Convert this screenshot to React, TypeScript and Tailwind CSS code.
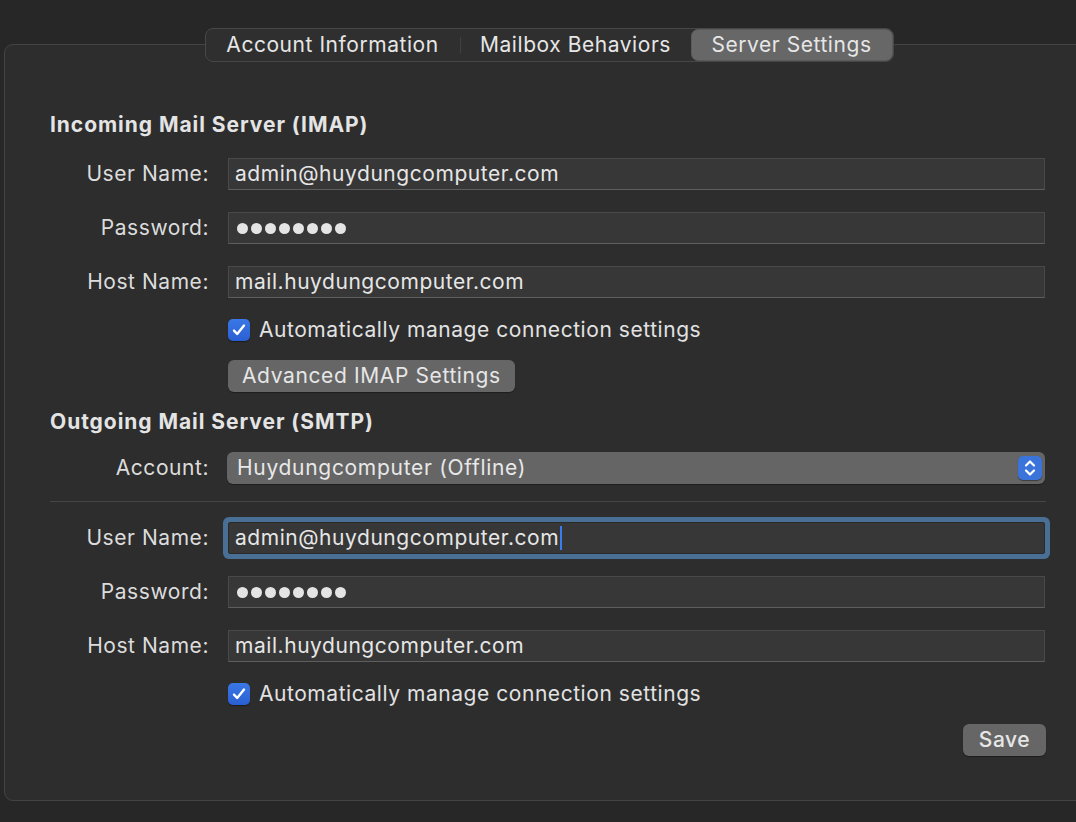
import React from 'react';

const font = { fontFamily: 'Inter, "Noto Sans", sans-serif' };

function Field({ label, value, focused }: { label: string; value?: string; focused?: boolean }) {
  return (
    <div className="flex items-center h-[32px]">
      <div className="w-[159px] text-right text-[21px] tracking-[0.55px] text-[#dcdcdc] shrink-0">{label}</div>
      <div
        className={
          focused
            ? 'ml-[19px] flex-1 h-[32px] flex items-center bg-[#373737] border border-[#2a2a2a] rounded-[2px] ring-[5px] ring-[#4a6f95] pl-[6px]'
            : 'ml-[19px] flex-1 h-[32px] flex items-center bg-[#373737] border border-[#494949] border-b-[#5e5e5e] pl-[6px]'
        }
      >
        {value ? (
          <span className="text-[21px] tracking-[0.55px] text-[#e6e6e6] flex items-center">
            {value}
            {focused && <span className="inline-block w-[2px] h-[24px] bg-[#3a7bf0] ml-[1px]"></span>}
          </span>
        ) : (
          <div className="flex gap-[3px] ml-[2px]">
            {Array.from({ length: 8 }).map((_, i) => (
              <span key={i} className="w-[11px] h-[11px] rounded-full bg-[#e4e4e4]"></span>
            ))}
          </div>
        )}
      </div>
    </div>
  );
}

function Check({ label }: { label: string }) {
  return (
    <div className="flex items-center h-[24px] pl-[178px]">
      <div className="w-[22px] h-[22px] rounded-[5px] bg-gradient-to-b from-[#3a78e6] to-[#2a5fd2] flex items-center justify-center shadow-[0_1px_1px_rgba(0,0,0,0.4)]">
        <svg width="16" height="16" viewBox="0 0 16 16" fill="none">
          <path d="M3 8.6l3.2 3.4L13 3.6" stroke="#ffffff" strokeWidth="2.4" strokeLinecap="round" strokeLinejoin="round" />
        </svg>
      </div>
      <span className="ml-[9px] text-[21px] tracking-[0.55px] text-[#e2e2e2]">{label}</span>
    </div>
  );
}

export default function App() {
  return (
    <div className="w-[1076px] h-[822px] bg-[#272727] overflow-hidden" style={font}>
      <div className="pt-[44px] pl-[4px]">
        <div className="relative w-[1090px] h-[757px] bg-[#2d2d2d] border border-[#444444] rounded-[9px]">
          {/* tabs */}
          <div className="absolute left-0 right-0 -top-[17px] flex justify-center">
            <div className="flex items-center h-[34px] bg-[#2f2f2f] border border-[#474747] rounded-[8px] text-[21px] tracking-[0.55px] text-[#e6e6e6]">
              <div className="w-[254px] h-full flex items-center justify-center">Account Information</div>
              <div className="w-[1px] h-[16px] bg-[#404040]"></div>
              <div className="w-[230px] h-full flex items-center justify-center">Mailbox Behaviors</div>
              <div className="w-[202px] h-[32px] flex items-center justify-center bg-[#676767] rounded-[7px] border border-[#5a5a5a]">
                Server Settings
              </div>
            </div>
          </div>

          <div className="pl-[45px] pr-[48px] pt-[68px] flex flex-col">
            <div className="h-[24px] flex items-center text-[21px] tracking-[0.95px] font-bold text-[#e4e4e4]">Incoming Mail Server (IMAP)</div>
            <div className="mt-[21px] flex flex-col gap-[22px]">
              <Field label="User Name:" value="admin@huydungcomputer.com" />
              <Field label="Password:" />
              <Field label="Host Name:" value="mail.huydungcomputer.com" />
            </div>
            <div className="mt-[20px]">
              <Check label="Automatically manage connection settings" />
            </div>
            <div className="mt-[18px] pl-[178px] flex">
              <button className="h-[32px] px-[14px] bg-[#666666] rounded-[6px] text-[21px] tracking-[0.62px] text-[#e6e6e6] shadow-[0_1px_1px_rgba(0,0,0,0.35)]">
                Advanced IMAP Settings
              </button>
            </div>
            <div className="mt-[18px] h-[24px] flex items-center text-[21px] tracking-[0.95px] font-bold text-[#e4e4e4]">Outgoing Mail Server (SMTP)</div>
            <div className="mt-[18px] flex items-center h-[32px]">
              <div className="w-[159px] text-right text-[21px] tracking-[0.55px] text-[#dcdcdc] shrink-0">Account:</div>
              <div className="ml-[18px] flex-1 h-[32px] bg-[#656565] rounded-[6px] flex items-center justify-between pl-[10px] pr-[3px] shadow-[0_1px_1px_rgba(0,0,0,0.35)]">
                <span className="text-[21px] tracking-[0.7px] text-[#e8e8e8]">Huydungcomputer (Offline)</span>
                <div className="w-[24px] h-[24px] rounded-[5px] bg-[#3a73da] flex items-center justify-center shadow-[0_1px_1px_rgba(0,0,0,0.4)]">
                  <svg width="14" height="20" viewBox="0 0 14 20" fill="none">
                    <path d="M3 7.5L7 3.5L11 7.5" stroke="#ffffff" strokeWidth="2.2" strokeLinecap="round" strokeLinejoin="round" />
                    <path d="M3 12.5L7 16.5L11 12.5" stroke="#ffffff" strokeWidth="2.2" strokeLinecap="round" strokeLinejoin="round" />
                  </svg>
                </div>
              </div>
            </div>
            <div className="mt-[17px] h-[1px] bg-[#454545] mr-[-1px]"></div>
            <div className="mt-[20px] flex flex-col gap-[22px]">
              <Field label="User Name:" value="admin@huydungcomputer.com" focused />
              <Field label="Password:" />
              <Field label="Host Name:" value="mail.huydungcomputer.com" />
            </div>
            <div className="mt-[20px]">
              <Check label="Automatically manage connection settings" />
            </div>
            <div className="mt-[18px] flex justify-end mr-[-1px]">
              <button className="h-[32px] w-[83px] bg-[#666666] rounded-[6px] text-[21px] tracking-[0.55px] font-medium text-[#e6e6e6] shadow-[0_1px_1px_rgba(0,0,0,0.35)]">
                Save
              </button>
            </div>
          </div>
        </div>
      </div>
    </div>
  );
}
